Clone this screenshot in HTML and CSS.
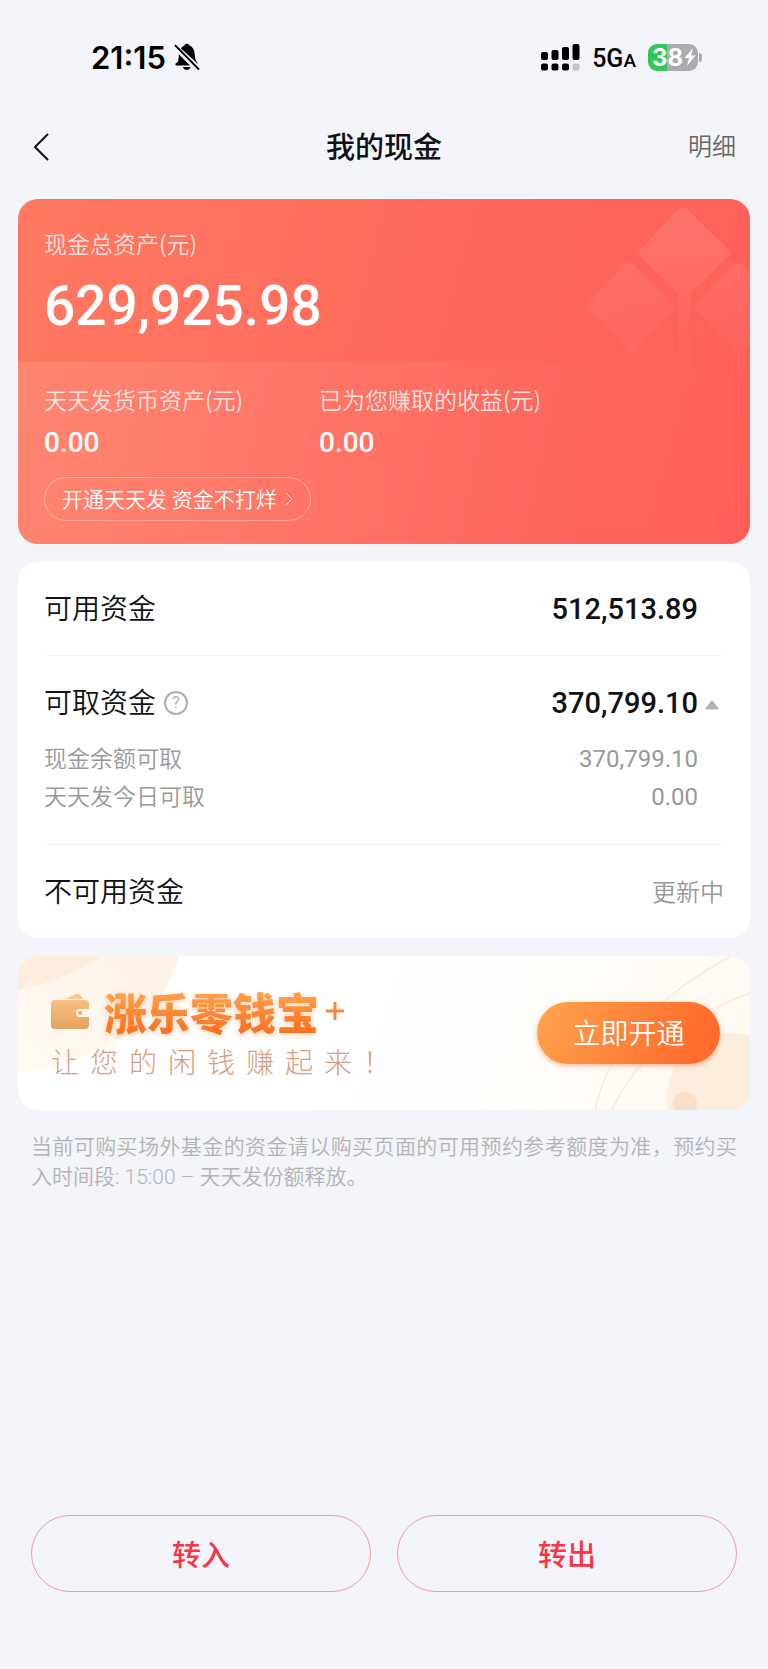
FILE: index.html
```html
<!DOCTYPE html>
<html lang="zh-CN">
<head>
<meta charset="utf-8">
<meta name="viewport" content="width=device-width, initial-scale=1">
<title>我的现金</title>
<link rel="stylesheet" href="styles.css">
</head>
<body>
<div class="page">
  <div class="status">
    <div class="status-side">
      <span class="time">21:15</span>
      <svg class="bell" viewBox="0 0 26 28" aria-hidden="true">
        <path d="M3.5 19.2C2.2 19.8 1.4 20.7 1.4 21.3c0 .8.6 1.2 1.5 1.2H16L4.8 11.3c-.1 3.9-.3 6.6-1.3 7.900Z"/>
        <path d="M7 5.400C8 3.900 9.400 3 10.400 2.600 10.900 1.300 11.700.8 12.900.8s2.100.6 2.500 1.800c3.400 1.300 5.200 4.600 5.300 8.400.1 3.400.6 5.900 2 7.800.5.700 1 1.400 1.200 2.300Z"/>
        <path d="M8.800 24h7.800c-.5 1.800-2 2.900-3.900 2.900S9.300 25.800 8.800 24Z"/>
        <path d="M1.500 2.600 24.500 26" fill="none" stroke="#000" stroke-width="1.900" stroke-linecap="round"/>
      </svg>
    </div>
    <div class="status-side">
      <svg class="signal" viewBox="0 0 39 27" aria-hidden="true">
        <rect x="0" y="8" width="7" height="8" rx="2"/><rect x="10.500" y="6" width="7" height="10" rx="2"/>
        <rect x="21" y="3" width="7" height="13" rx="2"/><rect x="31.500" y="0" width="7" height="16" rx="2"/>
        <rect x="0" y="19.500" width="7" height="7" rx="2"/><rect x="10.500" y="19.500" width="7" height="7" rx="2"/>
        <rect x="21" y="19.500" width="7" height="7" rx="2"/><rect x="31.500" y="19.500" width="7" height="7" rx="2" fill="#c4c5c9"/>
      </svg>
      <span class="network">5G<small>A</small></span>
      <span class="battery"><span class="level">38</span>
        <svg class="bolt" viewBox="0 0 12 20" aria-hidden="true"><path d="M9 1 .5 11H5L3 19l8.500-10.500H7Z"/></svg>
      </span>
    </div>
  </div>

  <header class="nav">
    <button class="back" aria-label="返回"><svg viewBox="0 0 16 28" aria-hidden="true"><path d="M14.500 1.500 2 14l12.500 12.500"/></svg></button>
    <h1>我的现金</h1>
    <a class="detail" href="#detail">明细</a>
  </header>

  <main>
    <section class="hero">
      <svg class="trees" viewBox="0 0 164 200" aria-hidden="true">
        <defs><linearGradient id="fade" gradientUnits="userSpaceOnUse" x1="0" y1="0" x2="0" y2="190"><stop offset="0" stop-color="#fff" stop-opacity=".11"/><stop offset=".5" stop-color="#fff" stop-opacity=".05"/><stop offset="1" stop-color="#fff" stop-opacity="0"/></linearGradient></defs>
        <g fill="url(#fade)">
          <path d="M92 2q5-4 10 0l41 40q3 3 0 6l-38 37v95H92V85L54 48q-3-3 0-6Z"/>
          <path d="M38 57q5-4 10 0l39 39q3 3 0 6l-35 35v60H41v-60L2 102q-3-3 0-6Z"/>
          <path d="M146 57q5-4 10 0l10 9v72l-8 2v50h-11v-53l-37-35q-3-3 0-6Z"/>
        </g>
      </svg>
      <div class="hero-top">
        <p class="label">现金总资产(元)</p>
        <p class="total">629,925.98</p>
      </div>
      <div class="hero-bottom">
        <div class="stats">
          <div><p class="label">天天发货币资产(元)</p><p class="value">0.00</p></div>
          <div><p class="label">已为您赚取的收益(元)</p><p class="value">0.00</p></div>
        </div>
        <button class="pill"><span>开通天天发 资金不打烊</span><svg viewBox="0 0 8 14" aria-hidden="true"><path d="m1 1 6 6-6 6"/></svg></button>
      </div>
    </section>

    <section class="funds">
      <div class="row"><h2>可用资金</h2><span class="amount">512,513.89</span></div>
      <div class="group">
        <div class="group-head">
          <h2>可取资金</h2>
          <button class="help" aria-label="说明">?</button>
          <span class="amount">370,799.10</span>
          <button class="fold" aria-label="收起"><svg viewBox="0 0 14 10" aria-hidden="true"><path d="M7 1.500 12.500 8.500h-11Z"/></svg></button>
        </div>
        <div class="sub"><span>现金余额可取</span><span class="sub-amount">370,799.10</span></div>
        <div class="sub"><span>天天发今日可取</span><span class="sub-amount">0.00</span></div>
      </div>
      <div class="row"><h2>不可用资金</h2><span class="pending">更新中</span></div>
    </section>

    <section class="banner">
      <svg class="banner-art" viewBox="0 0 732 154" preserveAspectRatio="xMaxYMid slice" aria-hidden="true">
        <defs><linearGradient id="glow" x1="0" y1="1" x2="1" y2="0"><stop offset="0" stop-color="#fffaf0"/><stop offset="1" stop-color="#fdeee2"/></linearGradient></defs>
        <path d="M0 0h161C145 60 80 114 0 116Z" fill="url(#glow)" opacity=".8"/>
        <path d="M0 0h84Q48 24 0 34Z" fill="#fde3cf" opacity=".5"/>
        <circle cx="714" cy="142" r="65" fill="#fbdcc0" opacity=".4"/>
        <circle cx="667" cy="148" r="12" fill="#fbc9a4" opacity=".4"/>
        <g fill="none" stroke="#fde8d6" stroke-width="1.500"><path d="M577 154C590 90 640 40 713 0"/><path d="M594 154C620 100 660 64 732 37"/></g>
      </svg>
      <div class="promo">
        <div class="promo-head">
          <svg class="wallet" viewBox="0 0 38 36" aria-hidden="true">
            <defs><linearGradient id="leather" x1="0" y1="0" x2="0" y2="1"><stop offset="0" stop-color="#f9c081"/><stop offset="1" stop-color="#e3a260"/></linearGradient></defs>
            <path d="M14 6 25 1q3-1 5 2l2 3Z" fill="#f8c896"/>
            <path d="M4 7h30q4 0 4 4v5H29q-4 0-4 4t4 4h9v8q0 4-4 4H4q-4 0-4-4V11q0-4 4-4Z" fill="url(#leather)"/>
            <circle cx="29" cy="20" r="2" fill="#e8a864"/>
          </svg>
          <h2 class="promo-title">涨乐零钱宝</h2>
          <svg class="plus" viewBox="0 0 20 20" aria-hidden="true"><path d="M10 1v18M1 10h18"/></svg>
        </div>
        <p class="slogan">让您的闲钱赚起来！</p>
      </div>
      <button class="open">立即开通</button>
    </section>

    <p class="note">当前可购买场外基金的资金请以购买页面的可用预约参考额度为准，预约买入时间段: 15:00 – 天天发份额释放。</p>
  </main>

  <footer class="actions">
    <button class="action">转入</button>
    <button class="action">转出</button>
  </footer>
</div>
</body>
</html>
```
FILE: styles.css
```css
* { box-sizing: border-box; }
body, h1, h2, p { margin: 0; }
body {
  background: #f3f5fa;
  color: #111;
  font-family: "Noto Sans CJK SC", sans-serif;
  font-weight: 350;
}
button { padding: 0; border: 0; background: none; font: inherit; color: inherit; cursor: pointer; }
a { color: inherit; text-decoration: none; }
svg { display: block; flex: none; }

.page { min-height: 100vh; display: flex; flex-direction: column; }

.status {
  display: flex; justify-content: space-between; align-items: center;
  height: 114px; padding: 0 66px 0 91px;
  font-family: Inter, sans-serif; color: #000;
}
.status-side { display: flex; align-items: center; }
.time { font-size: 31px; font-weight: 600; }
.bell { width: 26px; height: 28px; margin-left: 8px; }
.signal { width: 39px; height: 27px; }
.network { margin-left: 12px; padding-top: 2px; font-family: Roboto, sans-serif; font-size: 25px; font-weight: 500; }
.network small { font-size: 19px; }
.battery {
  position: relative; display: flex; align-items: center; gap: 1px;
  width: 50px; height: 27px; margin-left: 12px; margin-right: 4px; padding-left: 4px;
  border-radius: 9px;
  background: linear-gradient(90deg, #32c759 38%, #a9abb0 38%);
  color: #fff;
}
.battery::after {
  content: ""; position: absolute; right: -4px; top: 9px;
  width: 3px; height: 9px; border-radius: 0 3px 3px 0; background: #a9abb0;
}
.level { font-size: 24px; font-weight: 700; line-height: 27px; }
.bolt { width: 12px; height: 20px; fill: #fff; }

.nav {
  display: grid; grid-template-columns: 1fr auto 1fr; align-items: center;
  height: 66px; padding: 0 32px;
}
.back { justify-self: start; padding: 8px 1px; }
.back svg { width: 16px; height: 28px; fill: none; stroke: #111; stroke-width: 2; stroke-linecap: round; stroke-linejoin: round; }
.nav h1 { padding-bottom: 4px; font-size: 29px; font-weight: 500; line-height: 40px; }
.detail { justify-self: end; padding-bottom: 4px; font-size: 24px; line-height: 36px; color: #666; }

main { display: flex; flex-direction: column; gap: 18px; padding: 19px 18px 0; }

.hero {
  position: relative; overflow: hidden; border-radius: 20px; color: #fff;
  background: linear-gradient(105deg, #ff7961, #ff685c 60%, #ff5f58);
}
.trees { position: absolute; right: 0; top: 9px; width: 164px; height: 200px; }
.hero-top { height: 163px; padding: 28px 26px 0; }
.label { font-size: 23px; line-height: 32px; color: rgb(255 255 255 / 80%); }
.total { margin-top: 15px; font-family: Roboto, sans-serif; font-size: 55px; font-weight: 500; line-height: 64px; }
.hero-bottom {
  position: relative; padding: 21px 26px 23px;
  background: linear-gradient(100deg, rgb(255 255 255 / 11%), rgb(255 255 255 / 0%) 85%);
}
.stats { display: grid; grid-template-columns: 275px 1fr; }
.value { margin-top: 10px; font-family: Roboto, sans-serif; font-size: 28px; font-weight: 500; line-height: 36px; }
.pill {
  display: flex; align-items: center; gap: 8px;
  height: 44px; margin-top: 16px; padding: 0 17px;
  border: 1px solid rgb(255 255 255 / 40%); border-radius: 22px;
  font-size: 21px; line-height: 30px;
}
.pill span { padding-bottom: 2px; }
.pill svg { width: 8px; height: 14px; fill: none; stroke: #fff; stroke-opacity: .7; stroke-width: 1; }

.funds { padding: 0 26px; border-radius: 20px; background: #fff; }
.funds h2 { padding-bottom: 4px; font-size: 28px; font-weight: 350; line-height: 40px; }
.row { display: flex; align-items: center; justify-content: space-between; height: 93px; }
.group { padding-bottom: 30px; border: solid #f5f5f6; border-width: 1px 0; }
.group-head { display: flex; align-items: center; padding: 25px 0 13px; }
.amount { margin-left: auto; padding-right: 26px; font-family: Roboto, sans-serif; font-size: 29px; font-weight: 500; line-height: 40px; }
.group-head .amount { padding-right: 7px; }
.help {
  width: 24px; height: 24px; margin-left: 8px;
  border: 2px solid #b0b0b0; border-radius: 50%;
  font-family: Roboto, sans-serif; font-size: 16px; font-weight: 400; line-height: 20px; color: #b0b0b0;
}
.fold { margin-right: 5px; padding-top: 3px; }
.fold svg { width: 14px; height: 10px; fill: #b3b3b3; stroke: #b3b3b3; stroke-width: 2; stroke-linejoin: round; }
.sub { display: flex; align-items: baseline; justify-content: space-between; height: 38px; font-size: 23px; line-height: 38px; color: #999; }
.sub-amount { padding-right: 26px; font-family: Roboto, sans-serif; font-size: 24px; font-weight: 400; }
.pending { padding-bottom: 2px; font-size: 24px; color: #999; }

.banner {
  position: relative; overflow: hidden;
  display: flex; align-items: center; justify-content: space-between;
  height: 154px; padding: 0 30px 0 33px; border-radius: 20px;
  background: linear-gradient(110deg, #fff 40%, #fdfeff 55%, #fffdf8 75%, #fef8f0);
}
.banner-art { position: absolute; inset: 0; width: 100%; height: 100%; }
.promo { position: relative; padding-bottom: 2px; }
.promo-head { display: flex; align-items: center; }
.wallet { width: 38px; height: 36px; }
.promo-title {
  margin-left: 15px; font-size: 43px; font-weight: 900; line-height: 56px; color: transparent;
  background: linear-gradient(#ff9d48 25%, #fb7526 80%); -webkit-background-clip: text; background-clip: text;
  filter: drop-shadow(0 2px 3px rgb(250 130 50 / 35%));
}
.plus { width: 20px; height: 20px; margin-left: 6px; stroke: #fa8535; stroke-width: 3; }
.slogan { margin-top: 2px; font-size: 28px; font-weight: 300; line-height: 40px; letter-spacing: 11px; color: #d79d80; }
.open {
  position: relative; width: 183px; height: 62px; padding-bottom: 2px; border-radius: 31px;
  background: linear-gradient(115deg, #ffa44c, #ff6c2e 85%);
  box-shadow: 0 2px 5px rgb(255 110 50 / 45%);
  color: #fff; font-size: 28px;
}

.note {
  padding: 4px 13px 0;
  font-family: Roboto, "Noto Sans CJK SC", sans-serif; font-size: 21px; line-height: 30px;
  text-align: justify; color: #b3b3b3;
}

.actions { display: grid; grid-template-columns: 1fr 1fr; gap: 26px; margin-top: auto; padding: 24px 31px 77px; }
.action { height: 77px; padding-bottom: 2px; border: 1px solid #f59aa4; border-radius: 39px; color: #f93545; font-size: 29px; font-weight: 500; }
```
